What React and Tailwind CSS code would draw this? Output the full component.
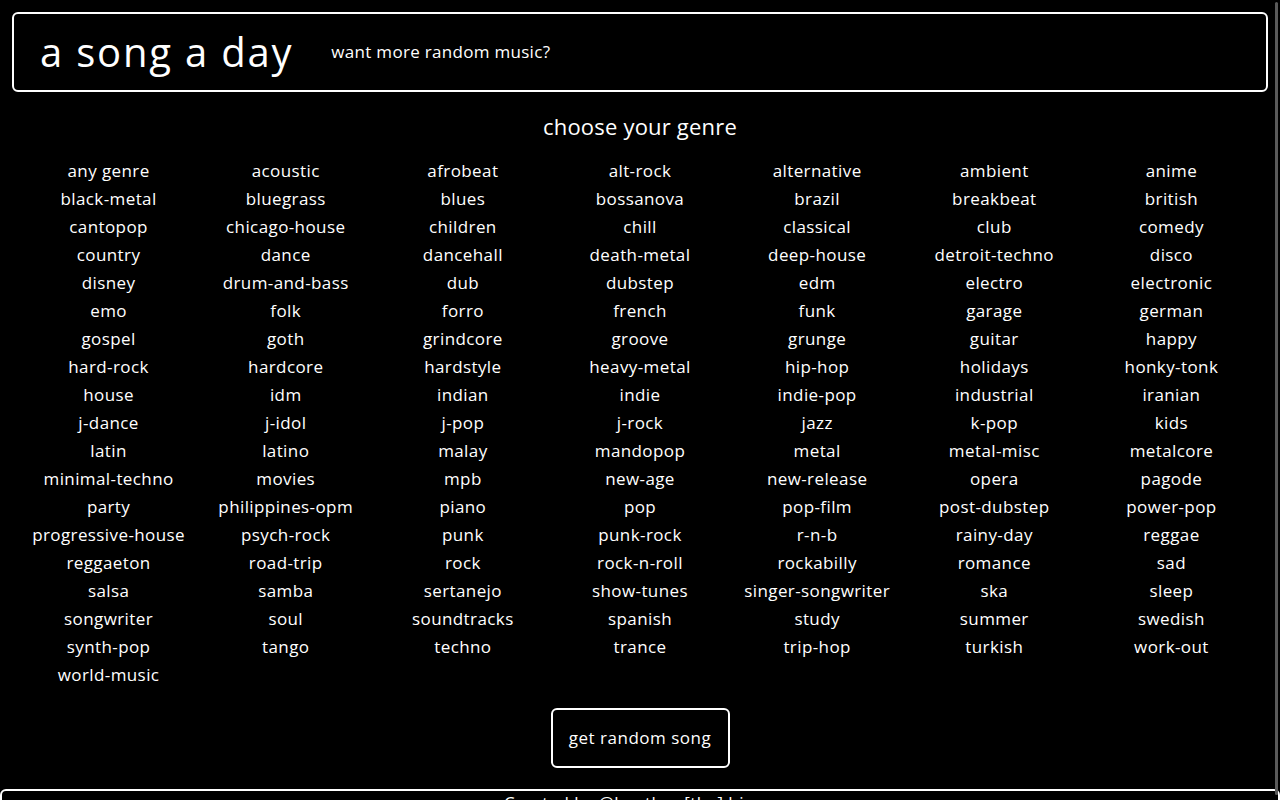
import React from "react";

const genres = [
  "any genre", "acoustic", "afrobeat", "alt-rock", "alternative", "ambient", "anime",
  "black-metal", "bluegrass", "blues", "bossanova", "brazil", "breakbeat", "british",
  "cantopop", "chicago-house", "children", "chill", "classical", "club", "comedy",
  "country", "dance", "dancehall", "death-metal", "deep-house", "detroit-techno", "disco",
  "disney", "drum-and-bass", "dub", "dubstep", "edm", "electro", "electronic",
  "emo", "folk", "forro", "french", "funk", "garage", "german",
  "gospel", "goth", "grindcore", "groove", "grunge", "guitar", "happy",
  "hard-rock", "hardcore", "hardstyle", "heavy-metal", "hip-hop", "holidays", "honky-tonk",
  "house", "idm", "indian", "indie", "indie-pop", "industrial", "iranian",
  "j-dance", "j-idol", "j-pop", "j-rock", "jazz", "k-pop", "kids",
  "latin", "latino", "malay", "mandopop", "metal", "metal-misc", "metalcore",
  "minimal-techno", "movies", "mpb", "new-age", "new-release", "opera", "pagode",
  "party", "philippines-opm", "piano", "pop", "pop-film", "post-dubstep", "power-pop",
  "progressive-house", "psych-rock", "punk", "punk-rock", "r-n-b", "rainy-day", "reggae",
  "reggaeton", "road-trip", "rock", "rock-n-roll", "rockabilly", "romance", "sad",
  "salsa", "samba", "sertanejo", "show-tunes", "singer-songwriter", "ska", "sleep",
  "songwriter", "soul", "soundtracks", "spanish", "study", "summer", "swedish",
  "synth-pop", "tango", "techno", "trance", "trip-hop", "turkish", "work-out",
  "world-music",
];

export default function App() {
  return (
    <div className="relative h-screen overflow-hidden bg-black text-white font-['Open_Sans',sans-serif]">
      {/* HEADER */}
      <header className="mx-3 mt-3 h-[80px] border-2 border-white rounded-md flex items-center pl-[26px]">
        <h1 className="text-[40px] leading-none tracking-[1.8px]">a song a day</h1>
        <p className="ml-[38px] text-[17px] tracking-[0.3px]">want more random music?</p>
      </header>

      <h2 className="mt-5 text-center text-[22px] leading-[28px] tracking-[0.2px]">choose your genre</h2>

      {/* GENRE GRID */}
      <div className="mt-[17px] px-5 grid grid-cols-7">
        {genres.map((g) => (
          <button key={g} className="h-[28px] text-center text-[17px] leading-[28px] tracking-[0.4px] whitespace-nowrap">
            {g}
          </button>
        ))}
      </div>

      <div className="mt-[19px] flex justify-center">
        <button className="w-[179px] h-[60px] border-2 border-white rounded-md text-[17px] tracking-[0.5px]">
          get random song
        </button>
      </div>

      {/* FOOTER */}
      <footer className="mt-[21px] border-2 border-white rounded-md pt-[2px] pb-4 text-center text-[17px] leading-[20px] tracking-[0.4px]">
        Created by @heather [the] hippo
      </footer>

      <div className="absolute top-[2px] right-[2px] w-[3px] h-[793px] rounded-full bg-[#5a5a5a]" />
    </div>
  );
}
